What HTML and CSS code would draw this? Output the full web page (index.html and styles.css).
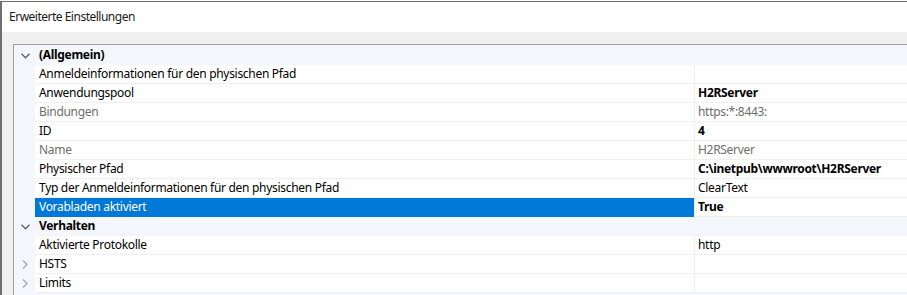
FILE: index.html
```html
<!DOCTYPE html>
<html>
<head>
<meta charset="utf-8">
<link rel="stylesheet" href="styles.css">
</head>
<body>
<div class="window">
  <div class="titlebar">Erweiterte Einstellungen</div>
  <div class="body">
    <div class="grid">
      <div class="row cat">
        <span class="gutter"><svg width="9" height="6" viewBox="0 0 9 6"><polyline points="0.5,0.8 4.5,4.8 8.5,0.8" fill="none" stroke="#5f5f5f" stroke-width="1.3"/></svg></span>
        <span class="label">(Allgemein)</span>
      </div>
      <div class="row"><span class="gutter"></span><span class="label">Anmeldeinformationen für den physischen Pfad</span><span class="value"></span></div>
      <div class="row"><span class="gutter"></span><span class="label">Anwendungspool</span><span class="value bold">H2RServer</span></div>
      <div class="row ro"><span class="gutter"></span><span class="label">Bindungen</span><span class="value">https:*:8443:</span></div>
      <div class="row"><span class="gutter"></span><span class="label">ID</span><span class="value bold">4</span></div>
      <div class="row ro"><span class="gutter"></span><span class="label">Name</span><span class="value">H2RServer</span></div>
      <div class="row"><span class="gutter"></span><span class="label">Physischer Pfad</span><span class="value bold">C:\inetpub\wwwroot\H2RServer</span></div>
      <div class="row"><span class="gutter"></span><span class="label">Typ der Anmeldeinformationen für den physischen Pfad</span><span class="value">ClearText</span></div>
      <div class="row selected"><span class="gutter"></span><span class="label">Vorabladen aktiviert</span><span class="value bold">True</span></div>
      <div class="row cat">
        <span class="gutter"><svg width="9" height="6" viewBox="0 0 9 6"><polyline points="0.5,0.8 4.5,4.8 8.5,0.8" fill="none" stroke="#5f5f5f" stroke-width="1.3"/></svg></span>
        <span class="label">Verhalten</span>
      </div>
      <div class="row"><span class="gutter"></span><span class="label">Aktivierte Protokolle</span><span class="value">http</span></div>
      <div class="row"><span class="gutter"><svg width="6" height="9" viewBox="0 0 6 9"><polyline points="1,0.5 5,4.5 1,8.5" fill="none" stroke="#a6a6a6" stroke-width="1.3"/></svg></span><span class="label">HSTS</span><span class="value"></span></div>
      <div class="row"><span class="gutter"><svg width="6" height="9" viewBox="0 0 6 9"><polyline points="1,0.5 5,4.5 1,8.5" fill="none" stroke="#a6a6a6" stroke-width="1.3"/></svg></span><span class="label">Limits</span><span class="value"></span></div>
    </div>
  </div>
</div>
</body>
</html>
```
FILE: styles.css
```css
html, body {
  margin: 0;
  padding: 0;
  background: #ffffff;
}
body {
  font-family: "Noto Sans", "Open Sans", sans-serif;
  font-size: 12px;
  letter-spacing: -0.3px;
  color: #000;
  height: 295px;
  overflow: hidden;
}
.window {
  margin-top: 1px;
  border-top: 1px solid #6e6e6e;
  border-left: 2px solid #707070;
  height: 293px;
  display: flex;
  flex-direction: column;
}
.titlebar {
  height: 30px;
  line-height: 30px;
  padding-left: 7px;
  background: #fff;
  color: #1a1a1a;
  letter-spacing: -0.5px;
  flex: none;
}
.body {
  flex: 1;
  background: #f0f0f0;
  padding: 12px 0 0 11px;
}
.grid {
  border-top: 1px solid #a0a0a0;
  border-left: 1px solid #a0a0a0;
  background: #f3f6fa;
  height: 100%;
  padding-top: 1px;
}
.row {
  display: grid;
  grid-template-columns: 21px 659px 1fr;
  height: 19px;
  line-height: 18px;
}
.gutter {
  display: flex;
  align-items: center;
  justify-content: center;
  height: 19px;
  background: #f3f6fa;
  padding-left: 1px;
}
.label {
  padding-left: 4px;
  background: #fff;
  border-bottom: 1px solid #f0f0f0;
  white-space: nowrap;
  overflow: hidden;
}
.value {
  padding-left: 3px;
  background: #fff;
  border-left: 1px solid #f0f0f0;
  border-bottom: 1px solid #f0f0f0;
  white-space: nowrap;
}
.cat .label {
  grid-column: 2 / 4;
  background: #f3f6fa;
  border-bottom: 1px solid #f3f6fa;
  font-weight: bold;
}
.bold {
  font-weight: bold;
}
.ro .label, .ro .value {
  color: #6d6d6d;
}
.selected .label {
  background: #0078d7;
  color: #fff;
  border-bottom-color: #0078d7;
}
```
